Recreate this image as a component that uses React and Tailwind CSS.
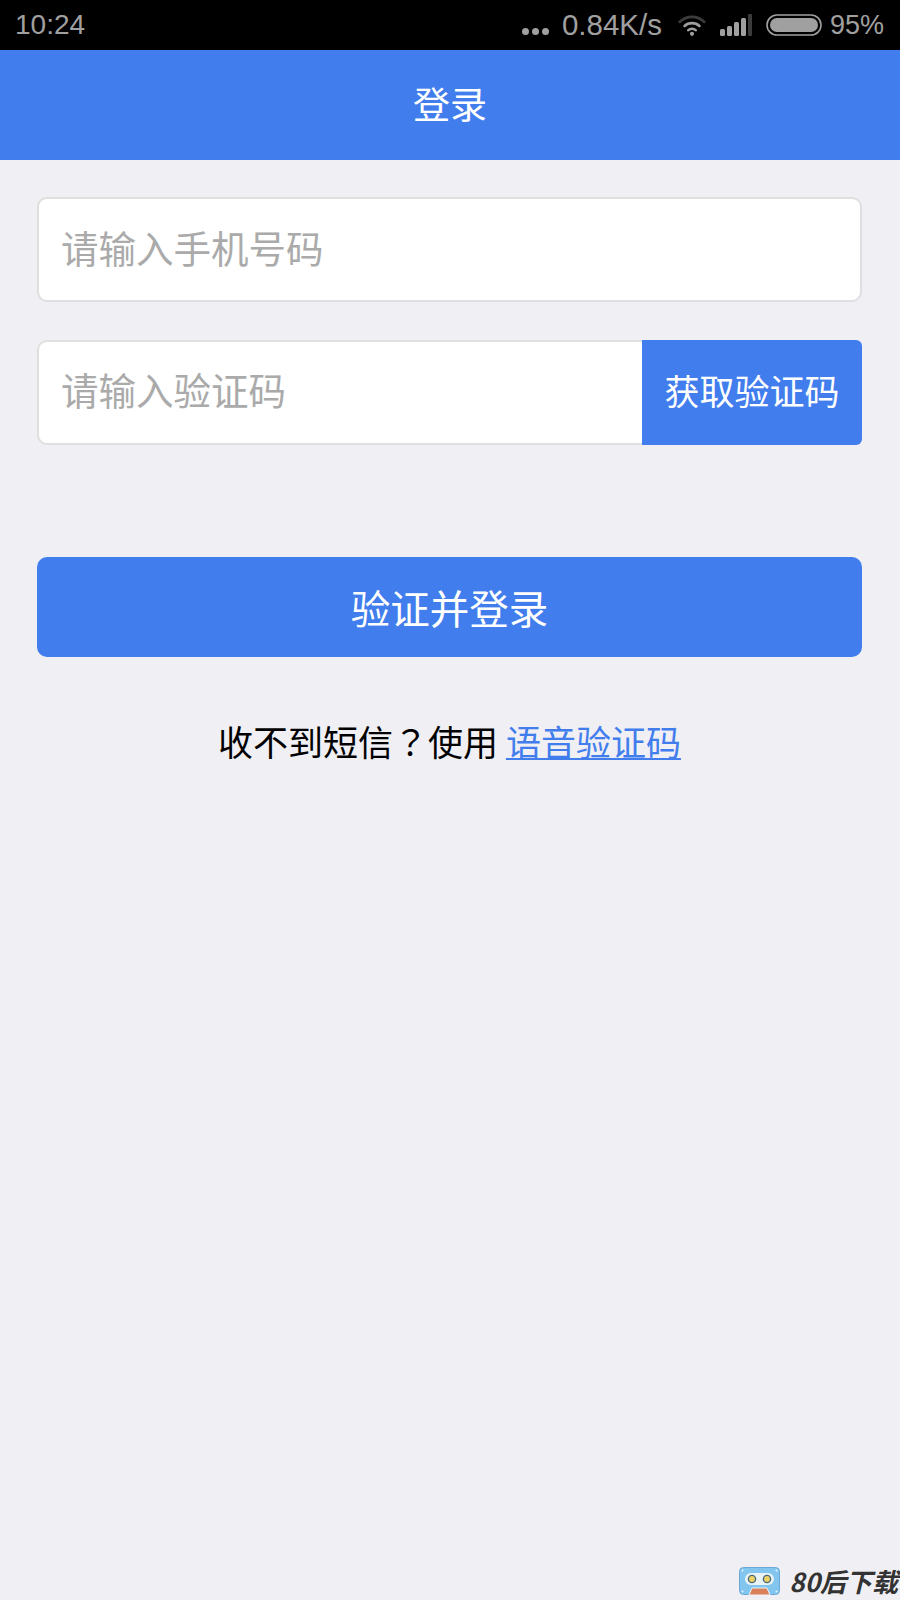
import React from 'react';

const cjk = "font-['Noto_Sans_CJK_SC','Noto_Sans',sans-serif]";

// Status bar glyphs
const WifiIcon = () => (
  <svg width="28" height="24" viewBox="0 0 30 24" fill="none">
    <path d="M2 8.5C9.5 1.5 20.5 1.5 28 8.5" stroke="#3c3c3c" strokeWidth="3" strokeLinecap="round" />
    <path d="M7 13C11.5 9 18.5 9 23 13" stroke="#a0a0a0" strokeWidth="2.8" strokeLinecap="round" />
    <path d="M11 17.5C13.2 15.6 16.8 15.6 19 17.5" stroke="#a0a0a0" strokeWidth="2.8" strokeLinecap="round" />
    <circle cx="15" cy="21.5" r="2.2" fill="#a0a0a0" />
  </svg>
);

const SignalIcon = () => (
  <svg width="32" height="22" viewBox="0 0 32 22">
    <rect x="0" y="15" width="5" height="7" rx="1.5" fill="#a0a0a0" />
    <rect x="7" y="12" width="5" height="10" rx="1.5" fill="#a0a0a0" />
    <rect x="14" y="8" width="5" height="14" rx="1.5" fill="#a0a0a0" />
    <rect x="21" y="4" width="5" height="18" rx="1.5" fill="#a0a0a0" />
    <rect x="28" y="0" width="4" height="22" rx="1" fill="#3c3c3c" />
  </svg>
);

const BatteryIcon = () => (
  <svg width="56" height="22" viewBox="0 0 56 22">
    <rect x="1" y="1" width="54" height="20" rx="10" fill="none" stroke="#a0a0a0" strokeWidth="1.6" />
    <rect x="4" y="4" width="48" height="14" rx="7" fill="#a0a0a0" />
  </svg>
);

// Cassette mark next to the site name
const CassetteLogo = () => (
  <svg width="41" height="28" viewBox="0 0 41 28">
    <rect x="0.5" y="0.5" width="40" height="27" rx="4" fill="#82c6f0" stroke="#6aa9d6" />
    <rect x="6" y="6" width="29" height="12" rx="6" fill="#e9f3f6" />
    <circle cx="13" cy="12" r="3.6" fill="#f0d264" stroke="#4a6a7a" strokeWidth="1.4" />
    <circle cx="28" cy="12" r="3.6" fill="#f0d264" stroke="#4a6a7a" strokeWidth="1.4" />
    <path d="M10 28L13 21H28L31 28Z" fill="#d9805a" stroke="#eef3f5" />
    <circle cx="3.5" cy="3.5" r="1" fill="#eef3f5" />
    <circle cx="37.5" cy="3.5" r="1" fill="#eef3f5" />
    <circle cx="3.5" cy="24.5" r="1" fill="#eef3f5" />
    <circle cx="37.5" cy="24.5" r="1" fill="#eef3f5" />
  </svg>
);

const StatusBar = () => (
  <div className="h-[50px] bg-black flex items-center justify-between pl-[15px] pr-[16px] font-['Liberation_Sans',sans-serif] text-[#a0a0a0] text-[28px] leading-none">
    <span>10:24</span>
    <div className="flex items-center">
      <div className="flex gap-[3px] mt-[13px] mr-[13px]">
        <span className="w-[7px] h-[7px] rounded-full bg-[#a0a0a0]" />
        <span className="w-[7px] h-[7px] rounded-full bg-[#a0a0a0]" />
        <span className="w-[7px] h-[7px] rounded-full bg-[#a0a0a0]" />
      </div>
      <span className="text-[29.5px]">0.84K/s</span>
      <div className="ml-[16px] mr-[14px]"><WifiIcon /></div>
      <SignalIcon />
      <div className="ml-[14px] mr-[8px]"><BatteryIcon /></div>
      <span className="text-[27px]">95%</span>
    </div>
  </div>
);

export default function App() {
  return (
    <div className={`relative min-h-[1600px] bg-[#efeff4] overflow-hidden ${cjk}`}>
      <StatusBar />
      <header className="h-[110px] pb-[4px] bg-[#417ded] flex items-center justify-center text-white text-[37px] leading-none">
        登录
      </header>

      <main className="pt-[37px] pl-[37px] pr-[38px]">
        <input
          type="text"
          placeholder="请输入手机号码"
          className="block w-full h-[105px] bg-white border-2 border-[#dfdfdf] rounded-[10px] pl-[22px] pb-[6px] text-[37.5px] outline-none placeholder:text-[#aaaaaa]"
        />

        <div className="flex h-[105px] mt-[38px]">
          <input
            type="text"
            placeholder="请输入验证码"
            className="min-w-0 flex-1 bg-white border-2 border-r-0 border-[#dfdfdf] rounded-l-[10px] pl-[22px] pb-[6px] text-[37.5px] outline-none placeholder:text-[#aaaaaa]"
          />
          <button className="w-[220px] shrink-0 pb-[4px] bg-[#417ded] text-white text-[35px] rounded-r-[6px]">
            获取验证码
          </button>
        </div>

        <button className="block w-full h-[100px] mt-[112px] bg-[#417ded] text-white text-[39.5px] rounded-[10px]">
          验证并登录
        </button>

        <p className="mt-[56px] text-center text-black text-[35px] leading-[56px]">
          收不到短信<span className="font-['Noto_Sans_CJK_TC',sans-serif]">？</span>使用 <a href="#" className="text-[#417ded] underline decoration-2 underline-offset-2">语音验证码</a>
        </p>
      </main>

      {/* site watermark */}
      <div className="absolute right-[2px] bottom-[5px] flex items-center gap-[9px]">
        <CassetteLogo />
        <span className="text-[#333333] text-[26px] leading-none font-bold italic">80后下载</span>
      </div>
    </div>
  );
}
